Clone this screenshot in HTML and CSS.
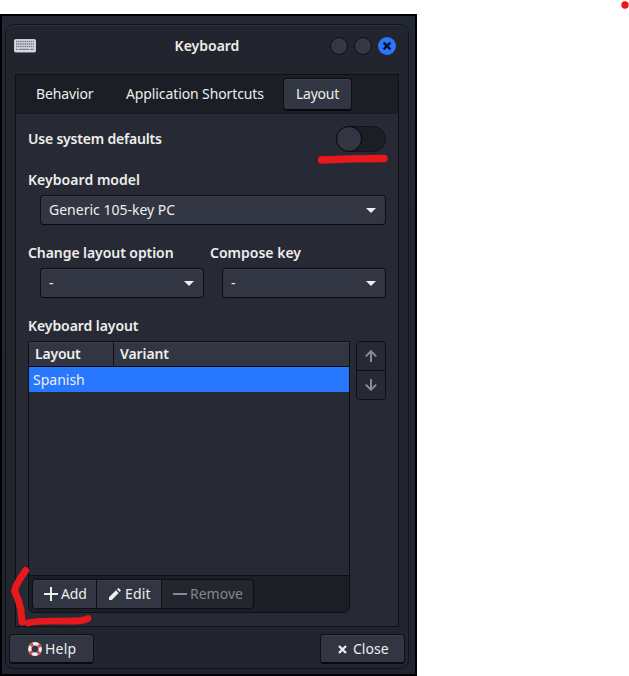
FILE: index.html
```html
<!DOCTYPE html>
<html lang="en">
<head>
<meta charset="utf-8">
<title>Keyboard</title>
<link rel="stylesheet" href="styles.css">
</head>
<body>
<div class="desktop">
  <div class="window">
    <header class="titlebar">
      <svg class="kbd" width="22" height="14" viewBox="0 0 22 14"><rect x=".5" y=".5" width="21" height="12.5" rx="1" fill="#d9dce6" stroke="#c3cad9"/><path d="M2 2.5h18M2 5h18M2 7.5h18" stroke="#777b86" stroke-width="1.3" stroke-dasharray="1.5 .6"/><path d="M2 10.3h2M5 10.3h10M16 10.3h4" stroke="#777b86" stroke-width="1.3"/></svg>
      <h1 class="title">Keyboard</h1>
      <div class="controls">
        <i class="dot"></i><i class="dot"></i>
        <i class="dot close"><svg width="18" height="18" viewBox="0 0 18 18"><path d="M5.6 5.6l6.8 6.8M12.4 5.6l-6.8 6.8" stroke="#0b1220" stroke-width="2.4"/></svg></i>
      </div>
    </header>
    <main class="panel">
      <nav class="tabs">
        <span class="tab behavior">Behavior</span>
        <span class="tab shortcuts">Application Shortcuts</span>
        <span class="tab active">Layout</span>
      </nav>
      <div class="form">
        <div class="switch-row"><b class="t-use">Use system defaults</b><span class="switch"><i></i></span></div>
        <b class="label t-model">Keyboard model</b>
        <div class="combo wide"><span class="t-generic">Generic 105-key PC</span><i class="caret"></i></div>
        <div class="pair">
          <div class="field"><b class="label t-change">Change layout option</b><div class="combo"><span class="dash">-</span><i class="caret"></i></div></div>
          <div class="field second"><b class="label">Compose key</b><div class="combo"><span class="dash">-</span><i class="caret"></i></div></div>
        </div>
        <b class="label t-klayout">Keyboard layout</b>
        <div class="lists">
          <div class="table">
            <div class="thead"><b class="th first">Layout</b><b class="th">Variant</b></div>
            <div class="row">Spanish</div>
            <div class="blank"></div>
            <div class="toolbar">
              <div class="group">
                <span class="tool add"><svg width="14" height="14" viewBox="0 0 14 14"><path d="M7 0v14M0 7h14" stroke="#eeeeec" stroke-width="2"/></svg>Add</span>
                <span class="tool edit"><svg width="12" height="12" viewBox="0 0 12 12"><path d="M0 9.2L6.9 2.3l2.8 2.8L2.8 12H0zM7.9 1.3L8.9.4q.6-.6 1.200 0l1.500 1.500q.6.6 0 1.200L10.700 4.100z" fill="#eeeeec"/></svg>Edit</span>
                <span class="tool remove"><svg width="14" height="14" viewBox="0 0 14 14"><path d="M0 7h14" stroke="#898a8e" stroke-width="2"/></svg>Remove</span>
              </div>
            </div>
          </div>
          <div class="movers">
            <span><svg width="12" height="12" viewBox="0 0 12 12"><path d="M6 12V1.5M.8 6.400l5.200-5.200 5.200 5.200" fill="none" stroke="#8a8b90" stroke-width="2"/></svg></span>
            <span><svg width="12" height="12" viewBox="0 0 12 12"><path d="M6 0v10.500M.8 5.600l5.200 5.200 5.200-5.200" fill="none" stroke="#8a8b90" stroke-width="2"/></svg></span>
          </div>
        </div>
      </div>
    </main>
    <footer class="actions">
      <span class="button help"><svg width="14" height="14" viewBox="0 0 14 14"><circle cx="7" cy="7" r="5.2" fill="none" stroke="#f2f2f2" stroke-width="3.4"/><circle cx="7" cy="7" r="5.2" fill="none" stroke="#e8484a" stroke-width="3.4" stroke-dasharray="3 5.168" stroke-dashoffset="-2.6"/></svg>Help</span>
      <span class="button shut"><svg width="9" height="9" viewBox="0 0 9 9"><path d="M1 1l7 7M8 1L1 8" stroke="#eeeeec" stroke-width="2.3"/></svg>Close</span>
    </footer>
  </div>
</div>
<svg class="marks" width="629" height="676" viewBox="0 0 629 676">
  <g fill="none" stroke="#e8191c" stroke-linecap="round" stroke-linejoin="round">
    <path d="M321.5 160Q352 158.500 384 158.500" stroke-width="7.500"/>
    <path d="M25.500 570.500Q16 584 14.500 591Q19 600 21 610Q21.500 617 22 622" stroke-width="7"/>
    <path d="M28 623C48 618 77 624.500 88 618.500" stroke-width="6.700"/>
  </g>
  <circle cx="625" cy="5" r="3.700" fill="#e8191c"/>
</svg>
</body>
</html>
```
FILE: styles.css
```css
* { box-sizing: border-box; }
body { margin: 0; width: 629px; height: 676px; overflow: hidden; background: #fff; padding-top: 14px; position: relative; font: 14px/20px "Noto Sans", "Open Sans", sans-serif; color: #eeeeec; }
span, b { white-space: nowrap; }
b { font-weight: 600; }
svg { display: block; flex: none; }
.desktop { width: 417px; height: 662px; border: 2px solid #000; padding: 8px 6px 6px 3px; background: linear-gradient(#212834, #202331); }
.window { width: 404px; height: 645px; border: 1px solid #12141a; border-radius: 9px; background: #23252e; box-shadow: inset 0 1px #2d303a; padding: 0 3px; display: flex; flex-direction: column; }
.titlebar { height: 49px; display: flex; align-items: center; padding: 0 9px 8px 5px; }
.title { font-size: 14px; line-height: 20px; font-weight: 600; margin: 0; flex: 1; text-align: center; padding-left: 48px; }
.controls { display: flex; gap: 6px; }
.dot { width: 18px; height: 18px; border: 1px solid #0d0f14; border-radius: 50%; background: #343843; }
.dot.close { background: #2777ff; border: 0; }
.panel { width: 384px; height: 553px; margin-left: 6px; border: 1px solid #0f1116; background: #272a34; }
.tabs { display: flex; height: 39px; background: #1b1e24; border-bottom: 1px solid #171a20; padding: 3px 0 0 20px; }
.tab { line-height: 32px; height: 33px; }
.behavior { width: 90px; letter-spacing: -.12px; }
.shortcuts { width: 157px; letter-spacing: -.11px; }
.active { width: 69px; line-height: 30px; padding-left: 12px; letter-spacing: -.25px; border: 1px solid #0d0f14; border-bottom: 2px solid #08090c; border-radius: 4px; background: #323642; box-shadow: inset 0 1px #3c404b; }
.form { padding: 12px 12px 0; display: flex; flex-direction: column; }
.switch-row { display: flex; height: 25px; justify-content: space-between; align-items: center; margin-bottom: 19px; }
.t-use { letter-spacing: -.2px; }
.t-change, .t-klayout { letter-spacing: -.07px; }
.t-model { letter-spacing: .05px; }
.switch { width: 50px; height: 26px; border-radius: 13px; border: 1px solid #111318; background: #1b1e24; }
.switch i { display: block; width: 26px; height: 26px; margin: -1px; border: 1px solid #08090c; border-radius: 50%; background: #323642; }
.label { display: block; height: 20px; margin-bottom: 5px; }
.combo { height: 30px; margin-left: 12px; padding: 0 10px 0 8px; display: flex; align-items: center; justify-content: space-between; border: 1px solid #0d0f14; border-bottom-color: #08090c; border-radius: 4px; background: #323642; box-shadow: inset 0 1px #3c404b; }
.wide { margin-bottom: 18px; }
.caret { border: 5px solid transparent; border-top-color: #eeeeec; border-bottom: 0; margin-right: -1px; }
.pair { display: flex; gap: 6px; margin-bottom: 18px; }
.field { width: 176px; }
.lists { display: flex; gap: 6px; }
.table { width: 322px; height: 272px; border: 1px solid #0d0f14; border-radius: 0 0 6px 6px; display: flex; flex-direction: column; overflow: hidden; }
.thead { display: flex; height: 25px; background: #323642; border-bottom: 1px solid #090b10; box-shadow: inset 0 1px #3c404b; }
.th { line-height: 24px; padding-left: 6px; letter-spacing: -.1px; }
.first { width: 85px; border-right: 1px solid #0d0f14; letter-spacing: -.2px; }
.row { height: 25px; line-height: 25px; background: #2777ff; padding-left: 4px; }
.blank { flex: 1; }
.toolbar { height: 37px; background: #1b1e24; border-top: 1px solid #0d0f14; padding: 3px; }
.group { display: flex; width: 222px; height: 30px; border: 1px solid #0d0f14; border-radius: 4px; overflow: hidden; background: #23262f; }
.tool { display: flex; align-items: center; border-right: 1px solid #0d0f14; background: #323642; box-shadow: inset 0 1px #3c404b; padding-left: 11px; gap: 3px; }
.add { width: 64px; letter-spacing: -.2px; }
.edit { width: 65px; padding-left: 12px; gap: 4px; letter-spacing: .2px; }
.remove { flex: 1; border: 0; background: none; box-shadow: none; color: #85868a; }
.movers { width: 30px; height: 59px; border: 1px solid #0d0f14; border-radius: 4px; }
.movers span { display: flex; height: 28px; align-items: center; justify-content: center; }
.movers span + span { border-top: 1px solid #0d0f14; height: 29px; }
.actions { display: flex; justify-content: space-between; padding-top: 7px; width: 396px; }
.button { height: 30px; width: 85px; border: 1px solid #0d0f14; border-bottom: 2px solid #08090c; border-radius: 4px; background: #323642; box-shadow: inset 0 1px #3c404b; display: flex; align-items: center; padding-top: 1px; }
.help { padding-left: 18px; gap: 3px; letter-spacing: .2px; }
.shut { padding-left: 17px; gap: 6px; }
.marks { position: absolute; left: 0; top: 0; }
```
